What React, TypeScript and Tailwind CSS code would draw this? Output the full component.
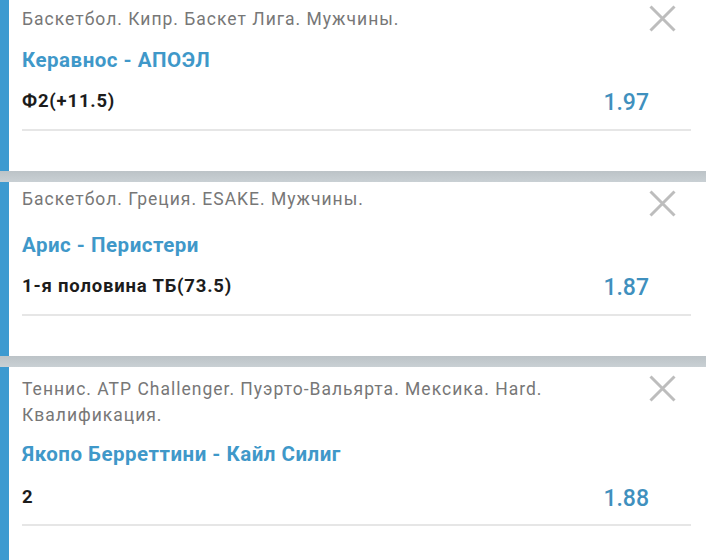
import React from "react";

type Card = {
  header: string;
  title: string;
  bet: string;
  odds: string;
  cardCls: string;
  headerCls: string;
  xCls: string;
  titleCls: string;
  betCls: string;
  divCls: string;
};

const cards: Card[] = [
  {
    header: "Баскетбол. Кипр. Баскет Лига. Мужчины.",
    title: "Керавнос - АПОЭЛ",
    bet: "Ф2(+11.5)",
    odds: "1.97",
    cardCls: "h-[171px]",
    headerCls: "mt-[6px]",
    xCls: "mt-[5px]",
    titleCls: "mt-[16px]",
    betCls: "mt-[13px]",
    divCls: "mt-[12px]",
  },
  {
    header: "Баскетбол. Греция. ESAKE. Мужчины.",
    title: "Арис - Перистери",
    bet: "1-я половина ТБ(73.5)",
    odds: "1.87",
    cardCls: "h-[174px]",
    headerCls: "mt-[4px]",
    xCls: "mt-[8px]",
    titleCls: "mt-[16px]",
    betCls: "mt-[13px]",
    divCls: "mt-[12px]",
  },
  {
    header: "Теннис. ATP Challenger. Пуэрто-Вальярта. Мексика. Hard. Квалификация.",
    title: "Якопо Берреттини - Кайл Силиг",
    bet: "2",
    odds: "1.88",
    cardCls: "flex-1",
    headerCls: "mt-[9px]",
    xCls: "mt-[8px]",
    titleCls: "mt-[14px]",
    betCls: "mt-[15px]",
    divCls: "mt-[11px]",
  },
];

function CloseIcon() {
  return (
    <svg width="27" height="27" viewBox="0 0 27 27" fill="none">
      <path d="M1.5 1.5 L25.5 25.5 M25.5 1.5 L1.5 25.5" stroke="#bdbdbd" strokeWidth="3" strokeLinecap="butt" />
    </svg>
  );
}

function BetCard({ c }: { c: Card }) {
  return (
    <div className={`flex bg-white ${c.cardCls}`}>
      <div className="w-[9px] shrink-0 bg-[#3d9ad0]" />
      <div className="flex-1 flex flex-col pl-[13px] pr-[15px]">
        <div className="flex items-start">
          <p className={`flex-1 pr-[30px] text-[17.5px] leading-[26px] tracking-[1px] text-[#777777] ${c.headerCls}`}>{c.header}</p>
          <div className={`shrink-0 w-[27px] h-[27px] mr-[15px] ${c.xCls}`}>
            <CloseIcon />
          </div>
        </div>
        <div className={`text-[20.5px] leading-[24px] tracking-[0.5px] font-bold text-[#3f98c9] ${c.titleCls}`}>{c.title}</div>
        <div className={`flex items-center justify-between h-[32px] pr-[42px] ${c.betCls}`}>
          <span className="text-[18.5px] leading-[24px] tracking-[0.8px] font-bold text-[#1c1c1c]">{c.bet}</span>
          <span className="mt-[4px] text-[23px] leading-[28px] font-medium text-[#3f90be]">{c.odds}</span>
        </div>
        <div className={`h-[2px] bg-[#e6e6e6] ${c.divCls}`} />
      </div>
    </div>
  );
}

export default function App() {
  return (
    <div
      className="w-[706px] h-[560px] overflow-hidden bg-white flex flex-col"
      style={{ fontFamily: "Roboto, 'Noto Sans', sans-serif" }}
    >
      <BetCard c={cards[0]} />
      <div className="h-[11px] shrink-0 bg-gradient-to-b from-[#bcc3c7] to-[#c9d0d4]" />
      <BetCard c={cards[1]} />
      <div className="h-[11px] shrink-0 bg-gradient-to-b from-[#bcc3c7] to-[#c9d0d4]" />
      <BetCard c={cards[2]} />
    </div>
  );
}
